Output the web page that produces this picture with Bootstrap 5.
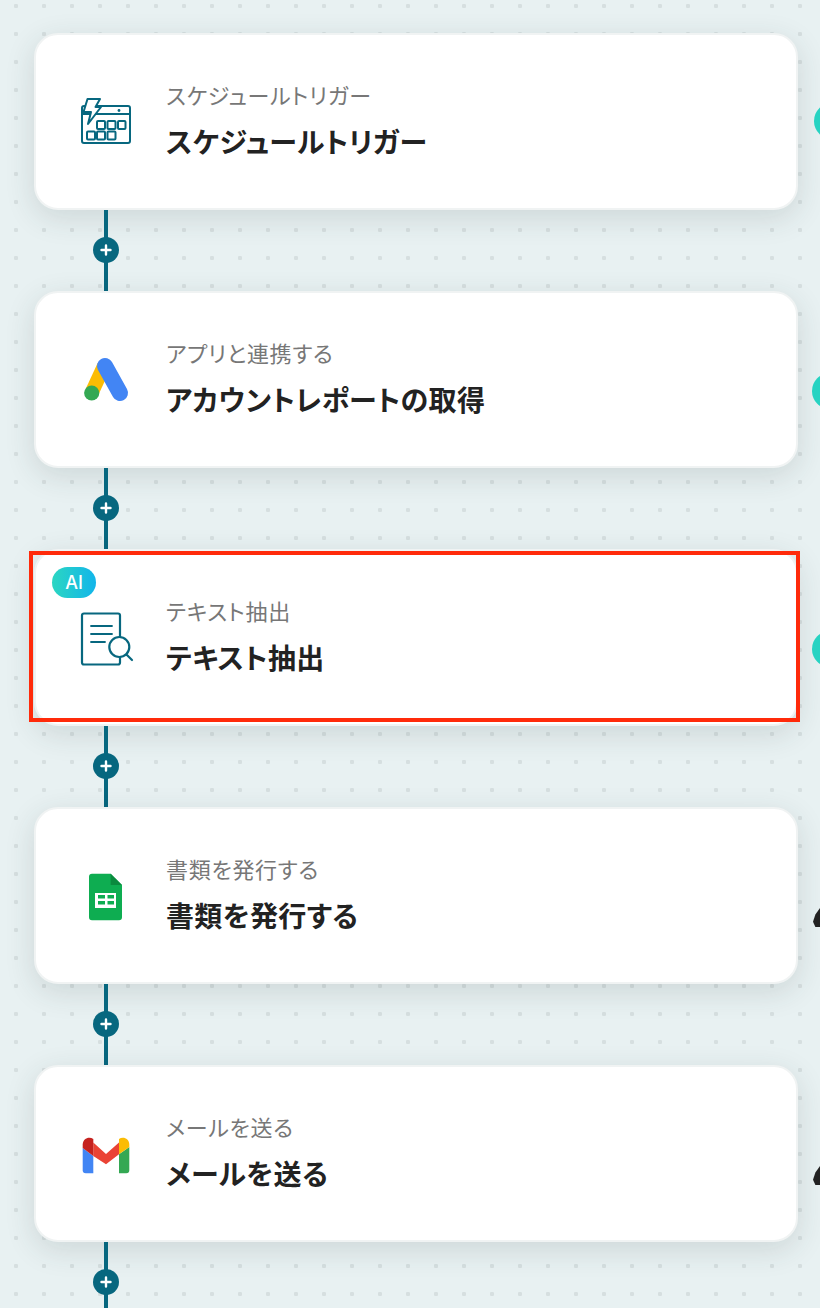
<!DOCTYPE html>
<html lang="ja">
<head>
  <meta charset="UTF-8">
  <title>フロー</title>
  <link href="https://cdn.jsdelivr.net/npm/bootstrap@5.3.3/dist/css/bootstrap.min.css" rel="stylesheet">
  <style>
    html, body { height: 100%; }
    body {
      overflow: hidden;
      font-family: "Noto Sans CJK JP", "Noto Sans", sans-serif;
      font-feature-settings: "palt";
      background-color: #e8f1f2;
      background-image: radial-gradient(circle at center, #d6dfe0 2px, transparent 2.4px);
      background-size: 28px 28px;
      background-position: 2px -8px;
    }
    .flow-wrap { padding: 33px 0 0 34px; width: 798px; }
    .flow-step { position: relative; }
    .flow-card {
      height: 177px;
      background: #fff;
      border: 2px solid #f0f3f3;
      border-radius: 24px;
      box-shadow: 0 8px 30px rgba(40, 60, 60, .14);
      padding-left: 42px;
      gap: 32px;
    }
    .flow-icon { width: 56px; height: 56px; flex: none; }
    .flow-text { padding-bottom: 8px; }
    .flow-sub { font-size: 22px; line-height: 30px; color: #777; letter-spacing: .7px; margin-bottom: 17px; }
    .flow-name { font-size: 28px; line-height: 30px; font-weight: 700; color: #222; letter-spacing: .35px; }
    .flow-link { position: relative; height: 81px; width: 4px; margin-left: 70px; background: #07677f; }
    .flow-plus {
      position: absolute; left: -11px; top: 27px;
      width: 26px; height: 26px; border-radius: 50%;
      background: #07677f;
    }
    .ai-tag {
      position: absolute; left: 18px; top: 18px;
      width: 44px; height: 31px; border-radius: 16px;
      background: linear-gradient(90deg, #2bd6c2, #12b5ea);
      color: #fff; font-family: Inter, sans-serif; font-size: 18px; font-weight: 500;
    }
    .red-frame { position: absolute; left: -5px; top: 2px; width: 771px; height: 171px; border: 4px solid #ff2a0a; pointer-events: none; }
    .side-dot { position: absolute; width: 36px; height: 36px; border-radius: 50%; background: #27d3c2; }
    .side-dark { position: absolute; left: 779px; top: 99px; width: 12px; height: 21px; background: #222; clip-path: polygon(70% 0, 100% 0, 100% 100%, 20% 100%, 0 75%, 20% 40%); }
  </style>
</head>
<body>
  <div class="flow-wrap">

    <div class="flow-step">
      <div class="flow-card d-flex align-items-center">
        <svg class="flow-icon" viewBox="0 0 56 56" fill="none" stroke="#07677f" stroke-width="2" stroke-linejoin="round">
          <rect x="4" y="12" width="48" height="37" rx="2"/>
          <path d="M4 20h48"/>
          <path d="M9.500 5H22l-4.500 8H23L10 30l3-12H5.500z" fill="#fff"/>
          <circle cx="41" cy="16.500" r="1.400" fill="#07677f" stroke="none"/>
          <rect x="19" y="27" width="8" height="8" rx="1"/><rect x="29.500" y="27" width="8" height="8" rx="1"/><rect x="40" y="27" width="7.500" height="8" rx="1"/>
          <rect x="9" y="37.500" width="8" height="8" rx="1"/><rect x="19" y="37.500" width="8" height="8" rx="1"/><rect x="29.500" y="37.500" width="8" height="8" rx="1"/>
        </svg>
        <div class="flow-text">
          <div class="flow-sub">スケジュールトリガー</div>
          <div class="flow-name">スケジュールトリガー</div>
        </div>
      </div>
      <span class="side-dot" style="left:780px;top:70px"></span>
    </div>
    <div class="flow-link">
      <span class="flow-plus d-flex align-items-center justify-content-center"><svg width="12" height="12" viewBox="0 0 12 12"><path d="M6 1.500v9M1.500 6h9" stroke="#fff" stroke-width="2.400" stroke-linecap="round"/></svg></span>
    </div>

    <div class="flow-step">
      <div class="flow-card d-flex align-items-center">
        <svg class="flow-icon" viewBox="0 0 56 56" fill="none">
          <path d="M26 14 14 40" stroke="#fbbc04" stroke-width="14"/>
          <path d="M27 14 42 41" stroke="#4285f4" stroke-width="16" stroke-linecap="round"/>
          <circle cx="13.700" cy="41" r="7.600" fill="#34a853"/>
        </svg>
        <div class="flow-text">
          <div class="flow-sub">アプリと連携する</div>
          <div class="flow-name">アカウントレポートの取得</div>
        </div>
      </div>
      <span class="side-dot" style="left:778px;top:82px"></span>
    </div>
    <div class="flow-link">
      <span class="flow-plus d-flex align-items-center justify-content-center"><svg width="12" height="12" viewBox="0 0 12 12"><path d="M6 1.500v9M1.500 6h9" stroke="#fff" stroke-width="2.400" stroke-linecap="round"/></svg></span>
    </div>

    <div class="flow-step">
      <div class="flow-card d-flex align-items-center">
        <svg class="flow-icon" viewBox="0 0 56 56" fill="none" stroke="#07677f" stroke-width="2.200" stroke-linecap="round" stroke-linejoin="round">
          <rect x="4" y="3.500" width="38" height="51" rx="2"/>
          <path d="M13 16h21M13 24h21M13 32h14" stroke-width="1.800"/>
          <circle cx="41.300" cy="37" r="10" fill="#fff"/>
          <path d="M48.500 44.500l5.500 5.500"/>
        </svg>
        <div class="flow-text">
          <div class="flow-sub">テキスト抽出</div>
          <div class="flow-name">テキスト抽出</div>
        </div>
      </div>
      <span class="ai-tag d-flex align-items-center justify-content-center">AI</span>
      <span class="red-frame"></span>
      <span class="side-dot" style="left:778px;top:82px"></span>
    </div>
    <div class="flow-link">
      <span class="flow-plus d-flex align-items-center justify-content-center"><svg width="12" height="12" viewBox="0 0 12 12"><path d="M6 1.500v9M1.500 6h9" stroke="#fff" stroke-width="2.400" stroke-linecap="round"/></svg></span>
    </div>

    <div class="flow-step">
      <div class="flow-card d-flex align-items-center">
        <svg class="flow-icon" viewBox="0 0 56 56">
          <path d="M14 5.700h18.700L44 17v32.300a3 3 0 0 1-3 3H14a3 3 0 0 1-3-3V8.700a3 3 0 0 1 3-3z" fill="#0ead51"/>
          <path d="M32.700 5.700 44 17H32.700z" fill="#0a8a3e"/>
          <path d="M17 25h21v15H17z" fill="#fff"/>
          <path d="M20 27h7v3.500h-7zM29.500 27H36v3.500h-6.500zM20 33h7v3.500h-7zM29.500 33H36v3.500h-6.500z" fill="#0ead51"/>
        </svg>
        <div class="flow-text">
          <div class="flow-sub">書類を発行する</div>
          <div class="flow-name">書類を発行する</div>
        </div>
      </div>
      <span class="side-dark"></span>
    </div>
    <div class="flow-link">
      <span class="flow-plus d-flex align-items-center justify-content-center"><svg width="12" height="12" viewBox="0 0 12 12"><path d="M6 1.500v9M1.500 6h9" stroke="#fff" stroke-width="2.400" stroke-linecap="round"/></svg></span>
    </div>

    <div class="flow-step">
      <div class="flow-card d-flex align-items-center">
        <svg class="flow-icon" viewBox="0 0 56 56">
          <path d="M4.700 22v22.300a3 3 0 0 0 3 3h7.600V30z" fill="#4285f4"/>
          <path d="M41 28.300v19h7.300a3 3 0 0 0 3-3V21z" fill="#34a853"/>
          <path d="M15.300 16.500 28 28l13-11.500v11.800L28 38.300 15.300 30z" fill="#ea4335"/>
          <path d="M4.700 22v-3.500c0-6 6.500-8.500 10.600-5.500V30z" fill="#c5221f"/>
          <path d="M41 13c4-3 10.300-.5 10.300 5.500V21L41 28.300z" fill="#fbbc04"/>
        </svg>
        <div class="flow-text">
          <div class="flow-sub">メールを送る</div>
          <div class="flow-name">メールを送る</div>
        </div>
      </div>
      <span class="side-dark"></span>
    </div>
    <div class="flow-link">
      <span class="flow-plus d-flex align-items-center justify-content-center"><svg width="12" height="12" viewBox="0 0 12 12"><path d="M6 1.500v9M1.500 6h9" stroke="#fff" stroke-width="2.400" stroke-linecap="round"/></svg></span>
    </div>

  </div>
  <script src="https://cdn.jsdelivr.net/npm/bootstrap@5.3.3/dist/js/bootstrap.bundle.min.js"></script>
</body>
</html>
